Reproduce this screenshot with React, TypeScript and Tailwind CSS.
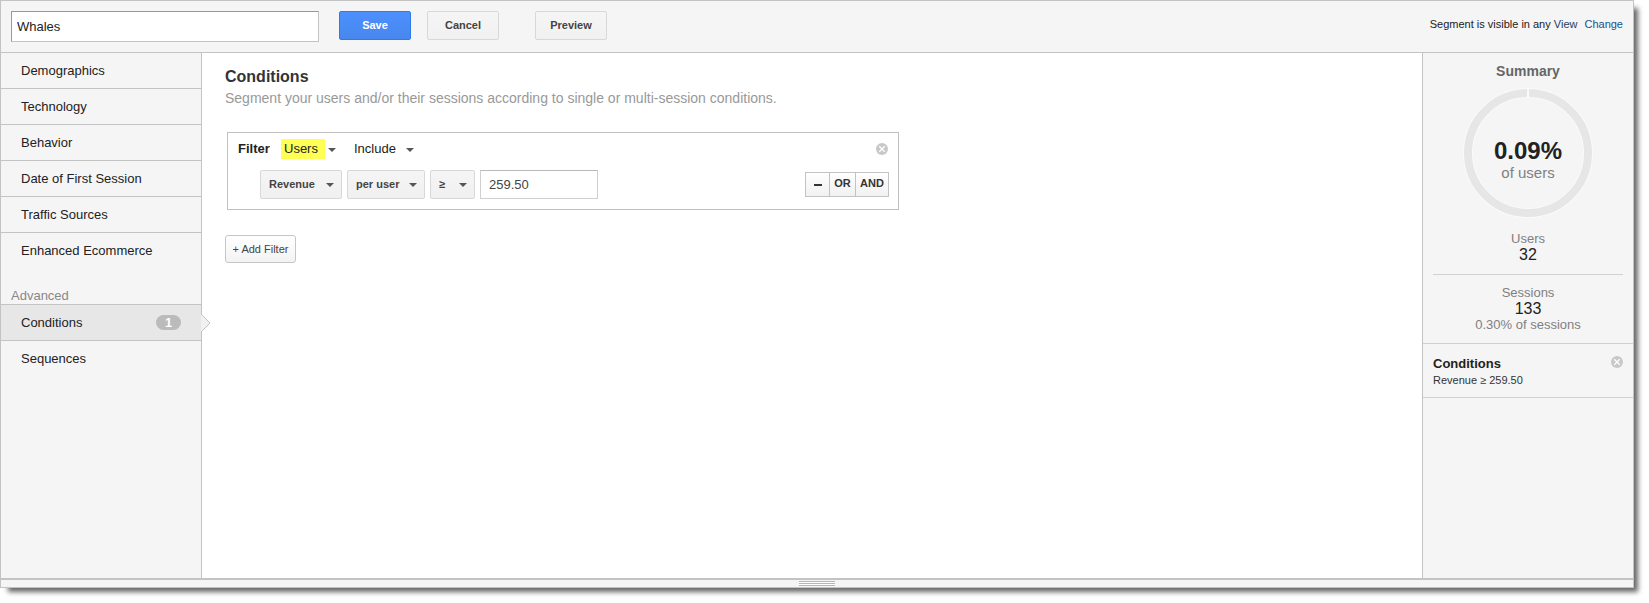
import type { ReactNode } from "react";
import clsx from "clsx";

const sections = [
  "Demographics",
  "Technology",
  "Behavior",
  "Date of First Session",
  "Traffic Sources",
  "Enhanced Ecommerce",
];

const Caret = ({ className }: { className?: string }) => (
  <svg
    viewBox="0 0 8 4"
    className={clsx("pointer-events-none absolute h-1 w-2", className)}
    aria-hidden="true"
  >
    <path d="M0 0h8L4 4z" fill="#555" />
  </svg>
);

const CloseIcon = () => (
  <svg viewBox="0 0 12 12" className="size-3" aria-hidden="true">
    <circle cx="6" cy="6" r="6" fill="#c8c8c8" />
    <path d="M3.3 3.3l5.4 5.4M8.7 3.3L3.3 8.7" stroke="#fff" strokeWidth="1.3" />
  </svg>
);

const ToolbarButton = ({
  primary,
  children,
}: {
  primary?: boolean;
  children: ReactNode;
}) => (
  <button
    className={clsx(
      "h-[29px] w-[72px] rounded-[2px] border pb-px text-[11px] font-bold",
      primary
        ? "border-[#3079ed] bg-linear-to-b from-[#4d90fe] to-[#4787ed] text-white"
        : "border-[#d8d8d8] bg-linear-to-b from-[#f5f5f5] to-[#f1f1f1] text-[#444]",
    )}
  >
    {children}
  </button>
);

const BoxSelect = ({
  label,
  value,
  className,
}: {
  label: string;
  value: string;
  className: string;
}) => (
  <div className={clsx("relative h-[29px]", className)}>
    <select
      aria-label={label}
      className="block size-full appearance-none rounded-[2px] border border-[#d8d8d8] bg-linear-to-b from-[#f5f5f5] to-[#f0f0f0] pb-px pl-2 text-[11px] font-bold text-[#444]"
    >
      <option>{value}</option>
    </select>
    <Caret className="top-[13px] right-2" />
  </div>
);

const PlainSelect = ({
  label,
  value,
  className,
  selectClass,
}: {
  label: string;
  value: string;
  className: string;
  selectClass: string;
}) => (
  <div className={clsx("relative h-5", className)}>
    <select
      aria-label={label}
      className={clsx(
        "block h-5 appearance-none text-[13px] text-[#222]",
        selectClass,
      )}
    >
      <option>{value}</option>
    </select>
    <Caret className="top-[9px] right-0" />
  </div>
);

const Sidebar = () => (
  <nav className="w-[201px] shrink-0 border-r border-[#c3c3c3] bg-[#f5f5f5] text-[13px] text-[#222]">
    <ul>
      {sections.map((name) => (
        <li key={name} className="border-b border-[#c3c3c3] last:border-b-0">
          <a href="#" className="flex h-[35px] items-center pl-5">
            {name}
          </a>
        </li>
      ))}
    </ul>
    <h2 className="mt-5 pl-[10px] leading-4 text-[#888]">Advanced</h2>
    <a
      href="#"
      className="relative flex h-[37px] items-center justify-between border-y border-[#c3c3c3] bg-[#e7e7e7] pr-5 pl-5"
    >
      Conditions
      <span className="w-[25px] rounded-full bg-[#bbb] text-center leading-[15px] font-bold text-white">
        1
      </span>
      {/* pointer towards the open section */}
      <svg
        viewBox="0 0 10 20"
        className="absolute top-2 -right-[10px] h-5 w-[10px]"
        aria-hidden="true"
      >
        <path d="M0 1l9 9-9 9" fill="#f1f1f1" stroke="#c3c3c3" />
      </svg>
    </a>
    <a href="#" className="flex h-[35px] items-center pl-5">
      Sequences
    </a>
  </nav>
);

const FilterBox = () => (
  <section className="ml-0.5 max-w-[672px] border border-[#c0c0c0] px-[9px] pt-[6px] pb-[10px]">
    <div className="flex h-5 items-center">
      <h2 className="w-11 pl-px text-[13px] font-bold text-[#222]">Filter</h2>
      <PlainSelect
        label="Filter scope"
        value="Users"
        className="w-[55px]"
        selectClass="w-11 bg-[#ffff54] pl-[3px]"
      />
      <PlainSelect
        label="Filter mode"
        value="Include"
        className="ml-[18px] w-[60px]"
        selectClass="w-12"
      />
      <button aria-label="Remove filter" className="mr-px ml-auto">
        <CloseIcon />
      </button>
    </div>
    <div className="mt-[11px] flex items-center pl-[23px]">
      <div className="flex gap-[5px]">
        <BoxSelect label="Metric" value="Revenue" className="w-[82px]" />
        <BoxSelect label="Scope" value="per user" className="w-[78px]" />
        <BoxSelect label="Operator" value="≥" className="w-[45px]" />
        <input
          aria-label="Value"
          defaultValue="259.50"
          className="h-[29px] w-[118px] border border-[#d0d0d0] border-t-[#b9b9b9] px-2 text-[13px] text-[#444]"
        />
      </div>
      <div className="ml-auto flex h-[25px] divide-x divide-[#c3c3c3] border border-[#c3c3c3] bg-linear-to-b from-white to-[#f1f1f1] text-[11px] font-bold text-[#333]">
        <button
          aria-label="Remove condition"
          className="flex w-6 items-center justify-center"
        >
          <span className="h-0.5 w-2 bg-[#333]" />
        </button>
        <button className="w-[26px] pb-0.5">OR</button>
        <button className="w-8 pb-0.5">AND</button>
      </div>
    </div>
  </section>
);

const Summary = () => (
  <aside className="w-[211px] shrink-0 border-l border-[#c3c3c3] bg-[#f5f5f5] text-center text-[13px] leading-4 text-[#808080]">
    <h2 className="mt-[10px] text-[14px] font-bold text-[#666]">Summary</h2>
    <div className="relative mx-auto mt-[9px] size-[130px]">
      <svg viewBox="0 0 130 130" className="size-full" aria-hidden="true">
        <circle cx="65" cy="65" r="60" fill="none" stroke="#fafafa" strokeWidth="10" />
        <circle cx="65" cy="65" r="60" fill="none" stroke="#e6e6e6" strokeWidth="8" />
        <path d="M65 0v10" stroke="#fff" strokeWidth="1.5" />
      </svg>
      <div className="absolute inset-0 flex flex-col items-center pt-[51px]">
        <strong className="text-[24px] leading-6 text-[#222]">0.09%</strong>
        <span className="text-[15px] leading-5">of users</span>
      </div>
    </div>
    <dl className="mx-[10px] mt-[13px] border-b border-[#d0d0d0] pb-[11px]">
      <dt>Users</dt>
      <dd className="text-[16px] text-[#222]">32</dd>
    </dl>
    <dl className="mt-[10px] border-b border-[#d0d0d0] pb-[10px]">
      <dt>Sessions</dt>
      <dd className="text-[16px] text-[#222]">133</dd>
      <dd>0.30% of sessions</dd>
    </dl>
    <div className="flex items-start justify-between border-b border-[#d0d0d0] px-[10px] pt-3 pb-[9px] text-left text-[#222]">
      <div>
        <h3 className="font-bold">Conditions</h3>
        <p className="text-[11px] text-[#333]">Revenue ≥ 259.50</p>
      </div>
      <button aria-label="Remove conditions">
        <CloseIcon />
      </button>
    </div>
  </aside>
);

export default function App() {
  return (
    <div className="flex min-h-screen flex-col bg-white pr-[15px] pb-[15px] font-['Liberation_Sans',Arial,sans-serif]">
      <div className="flex grow flex-col border border-[#c3c3c3] bg-white shadow-[6px_6px_5px_-2px_rgba(0,0,0,0.6)]">
        <header className="flex h-[52px] items-center border-b border-[#c3c3c3] bg-[#f5f5f5] px-[10px]">
          <input
            aria-label="Segment name"
            defaultValue="Whales"
            className="h-[31px] w-[308px] border border-[#c3c3c3] border-t-[#999] border-l-[#999] bg-white px-[5px] text-[13px] text-[#222]"
          />
          <div className="ml-5 flex items-center pb-0.5">
            <ToolbarButton primary>Save</ToolbarButton>
            <div className="ml-4 flex gap-9">
              <ToolbarButton>Cancel</ToolbarButton>
              <ToolbarButton>Preview</ToolbarButton>
            </div>
          </div>
          <p className="ml-auto pb-1 text-[11px] text-[#222]">
            Segment is visible in any <span className="text-[#23405f]">View</span>
            <a href="#" className="ml-[7px] text-[#15518f]">
              Change
            </a>
          </p>
        </header>

        <div className="flex grow">
          <Sidebar />
          <main className="min-w-0 grow px-[23px] pt-[14px]">
            <h1 className="text-[16px] leading-5 font-bold text-[#333]">
              Conditions
            </h1>
            <p className="mb-[23px] text-[14px] leading-[22px] text-[#999]">
              Segment your users and/or their sessions according to single or
              multi-session conditions.
            </p>
            <FilterBox />
            <button className="mt-[25px] h-7 w-[71px] rounded-[3px] border border-[#c6c6c6] bg-linear-to-b from-white to-[#f3f3f3] text-[11px] text-[#444]">
              + Add Filter
            </button>
          </main>
          <Summary />
        </div>

        {/* Resize handle */}
        <footer className="flex h-[9px] items-center justify-center border-t-2 border-[#c3c3c3] bg-[#f5f5f5]">
          <div className="flex w-9 flex-col gap-px bg-white">
            <span className="h-px bg-[#b5b5b5]" />
            <span className="h-px bg-[#b5b5b5]" />
            <span className="h-px bg-[#b5b5b5]" />
          </div>
        </footer>
      </div>
    </div>
  );
}
